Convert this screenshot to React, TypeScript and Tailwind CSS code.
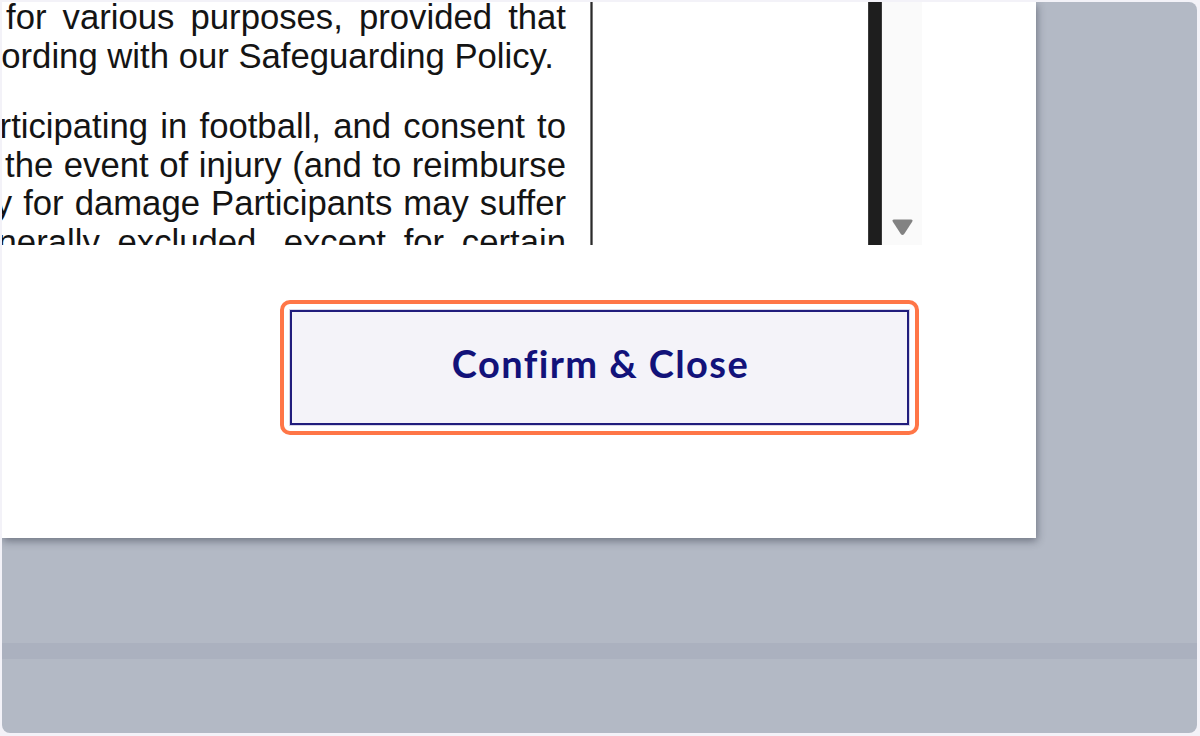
import React from "react";

const textFont = { fontFamily: '"Liberation Sans", Arial, sans-serif' };

function DocLine({
  children,
  className,
}: {
  children: React.ReactNode;
  className: string;
}) {
  return (
    <div
      className={`whitespace-nowrap text-justify [text-align-last:justify] ${className}`}
    >
      {children}
    </div>
  );
}

function DocumentViewer() {
  return (
    <div className="flex h-[243px]">
      {/* page */}
      <div
        className="h-full w-[588px] overflow-hidden text-[34.7px] leading-[38.5px] text-[#141414]"
        style={textFont}
      >
        <div className="mt-[-4px]">
          <DocLine className="ml-[4px] w-[560px]">
            for various purposes, provided that
          </DocLine>
          <div className="flex w-[552px] justify-end whitespace-nowrap">
            ording with our Safeguarding Policy.
          </div>
        </div>
        <div className="mt-[32px]">
          <DocLine className="ml-[-41px] w-[605px]">
            participating in football, and consent to
          </DocLine>
          <DocLine className="ml-[3px] w-[561px]">
            the event of injury (and to reimburse
          </DocLine>
          <DocLine className="ml-[-94px] w-[658px]">
            liability for damage Participants may suffer
          </DocLine>
          <DocLine className="ml-[-43px] w-[607px]">
            generally excluded, except for certain
          </DocLine>
        </div>
      </div>
      <div className="h-full w-[3px] border-x border-[#777] bg-[#2a2a2a]" />
      <div className="h-full w-[275px] bg-white" />
      {/* scrollbar */}
      <div className="h-full w-[14px] border-x border-[#3a3a3a] bg-[#1e1e1e]" />
      <div className="flex h-full w-[40px] items-end justify-center bg-[#fafafa] pb-[9px]">
        <svg width="23" height="18" viewBox="0 0 23 18">
          <path
            d="M3 1.5 H20 Q22.5 1.5 21 4 L13.2 16 Q11.5 18 9.8 16 L2 4 Q0.5 1.5 3 1.5 Z"
            fill="#828282"
          />
        </svg>
      </div>
    </div>
  );
}

export default function App() {
  return (
    <div className="h-[736px] w-[1200px] bg-[#f3f2f8] pb-[3px] pl-[2px] pr-[3px] pt-[2px]">
      <div className="flex h-full w-full flex-col overflow-hidden rounded-b-[8px] rounded-tr-[8px] bg-[#b3b9c5]">
        <div className="h-[536px] w-[1034px] shrink-0 bg-white shadow-[1px_3px_8px_rgba(30,35,50,0.45)]">
          <DocumentViewer />
          <div className="ml-[278px] mt-[55px] h-[135px] w-[639px] rounded-[10px] border-[4px] border-[#ff7647] bg-white p-[6px]">
            <button
              className="flex h-full w-full items-center justify-center border-2 border-[#211d7d] bg-[#f4f3f9] pb-[8px] pl-[2px] text-[38px] font-bold tracking-[1.4px] text-[#12127a] shadow-[0_0_0_1px_#d8d7e8]"
              style={{ fontFamily: 'Lato, "Open Sans", sans-serif' }}
            >
              Confirm &amp; Close
            </button>
          </div>
        </div>
        <div className="mt-[105px] h-[16px] w-full shrink-0 bg-[#abb1bf]" />
      </div>
    </div>
  );
}
